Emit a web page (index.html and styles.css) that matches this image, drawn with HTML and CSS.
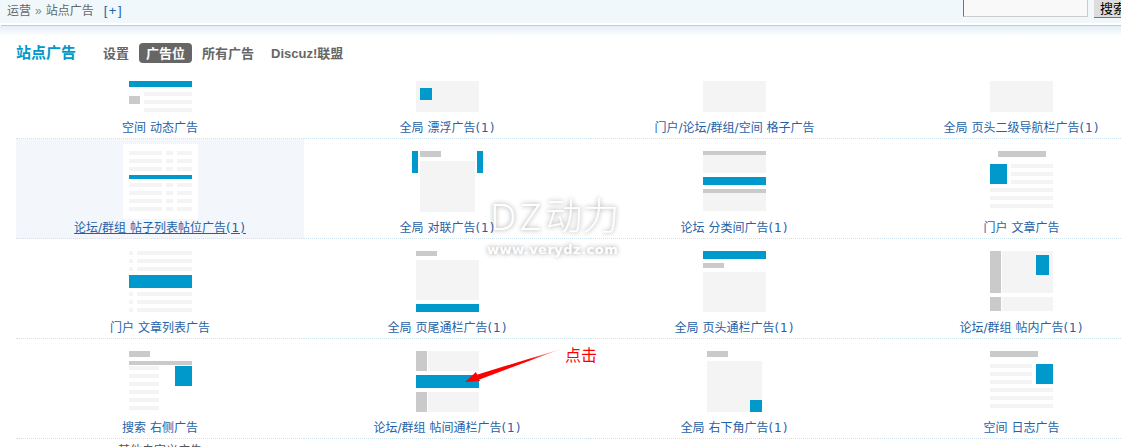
FILE: index.html
```html
<!DOCTYPE html>
<html lang="zh-CN">
<head>
    <meta charset="UTF-8">
    <title>站点广告</title>
    <link rel="stylesheet" href="styles.css">
</head>
<body>
    <div class="page">
        <div class="topbar">
            <div class="crumbs">运营<span class="crumb-sep">»</span>站点广告<a class="crumb-add">[+]</a></div>
            <div class="search">
                <input type="text" class="search-input">
                <button type="button" class="search-btn">搜索</button>
            </div>
        </div>
        <div class="topbar-fade"></div>

        <div class="tabs">
            <h1 class="tabs-title">站点广告</h1>
            <a class="tab">设置</a>
            <a class="tab tab-on">广告位</a>
            <a class="tab">所有广告</a>
            <a class="tab">Discuz!联盟</a>
        </div>

        <div class="ad-grid">
            <a class="ad-cell">
                <svg class="thumb thumb-cut" viewBox="-6 30 75 38">
                    <rect class="b" x="0" y="30" width="63" height="6"/>
                    <rect class="g" x="0" y="45" width="11" height="8"/>
                    <rect class="l" x="15" y="41" width="48" height="4"/>
                    <rect class="l" x="15" y="49" width="48" height="4"/>
                    <rect class="l" x="15" y="57" width="48" height="4"/>
                </svg>
                <span class="ad-name">空间 动态广告</span>
            </a>
            <a class="ad-cell">
                <svg class="thumb thumb-cut" viewBox="-6 30 75 38">
                    <rect class="l" x="0" y="30" width="63" height="31"/>
                    <rect class="b" x="4" y="37" width="12" height="12"/>
                </svg>
                <span class="ad-name">全局 漂浮广告<span class="num">(1)</span></span>
            </a>
            <a class="ad-cell">
                <svg class="thumb thumb-cut" viewBox="-6 30 75 38">
                    <rect class="l" x="0" y="30" width="63" height="31"/>
                </svg>
                <span class="ad-name">门户/论坛/群组/空间 格子广告</span>
            </a>
            <a class="ad-cell">
                <svg class="thumb thumb-cut" viewBox="-6 30 75 38">
                    <rect class="l" x="0" y="30" width="63" height="31"/>
                </svg>
                <span class="ad-name">全局 页头二级导航栏广告<span class="num">(1)</span></span>
            </a>

            <a class="ad-cell ad-hover">
                <svg class="thumb" viewBox="-6 -7 75 75">
                    <rect class="w" x="-6" y="-7" width="75" height="75"/>
                    <rect class="l" x="0" y="0" width="33" height="4"/>
                    <rect class="l" x="37" y="0" width="7" height="4"/>
                    <rect class="l" x="48" y="0" width="15" height="4"/>
                    <rect class="l" x="0" y="8" width="33" height="4"/>
                    <rect class="l" x="37" y="8" width="7" height="4"/>
                    <rect class="l" x="48" y="8" width="15" height="4"/>
                    <rect class="l" x="0" y="16" width="33" height="4"/>
                    <rect class="l" x="37" y="16" width="7" height="4"/>
                    <rect class="l" x="48" y="16" width="15" height="4"/>
                    <rect class="b" x="0" y="24" width="63" height="4"/>
                    <rect class="l" x="0" y="32" width="33" height="4"/>
                    <rect class="l" x="37" y="32" width="7" height="4"/>
                    <rect class="l" x="48" y="32" width="15" height="4"/>
                    <rect class="l" x="0" y="40" width="33" height="4"/>
                    <rect class="l" x="37" y="40" width="7" height="4"/>
                    <rect class="l" x="48" y="40" width="15" height="4"/>
                    <rect class="l" x="0" y="48" width="33" height="4"/>
                    <rect class="l" x="37" y="48" width="7" height="4"/>
                    <rect class="l" x="48" y="48" width="15" height="4"/>
                    <rect class="l" x="0" y="56" width="33" height="4"/>
                    <rect class="l" x="37" y="56" width="7" height="4"/>
                    <rect class="l" x="48" y="56" width="15" height="4"/>
                </svg>
                <span class="ad-name">论坛/群组 帖子列表帖位广告<span class="num">(1)</span></span>
            </a>
            <a class="ad-cell">
                <svg class="thumb" viewBox="-6 -7 75 75">
                    <rect class="b" x="-4" y="0" width="6" height="22"/>
                    <rect class="b" x="61" y="0" width="6" height="22"/>
                    <rect class="g" x="4" y="0" width="21" height="6"/>
                    <rect class="l" x="4" y="10" width="55" height="51"/>
                </svg>
                <span class="ad-name">全局 对联广告<span class="num">(1)</span></span>
            </a>
            <a class="ad-cell">
                <svg class="thumb" viewBox="-6 -7 75 75">
                    <rect class="g" x="0" y="0" width="63" height="4"/>
                    <rect class="l" x="0" y="4" width="63" height="18"/>
                    <rect class="b" x="0" y="26" width="63" height="8"/>
                    <rect class="g" x="0" y="38" width="63" height="4"/>
                    <rect class="l" x="0" y="42" width="63" height="18"/>
                </svg>
                <span class="ad-name">论坛 分类间广告<span class="num">(1)</span></span>
            </a>
            <a class="ad-cell">
                <svg class="thumb" viewBox="-6 -7 75 75">
                    <rect class="g" x="8" y="0" width="48" height="6"/>
                    <rect class="b" x="0" y="13" width="17" height="20"/>
                    <rect class="l" x="21" y="13" width="42" height="4"/>
                    <rect class="l" x="21" y="21" width="42" height="4"/>
                    <rect class="l" x="21" y="29" width="42" height="4"/>
                    <rect class="l" x="0" y="37" width="63" height="4"/>
                    <rect class="l" x="0" y="45" width="63" height="4"/>
                    <rect class="l" x="0" y="53" width="63" height="4"/>
                </svg>
                <span class="ad-name">门户 文章广告</span>
            </a>

            <a class="ad-cell">
                <svg class="thumb" viewBox="-6 -7 75 75">
                    <rect class="l" x="0" y="0" width="4" height="4"/>
                    <rect class="l" x="8" y="0" width="55" height="4"/>
                    <rect class="l" x="0" y="8" width="4" height="4"/>
                    <rect class="l" x="8" y="8" width="55" height="4"/>
                    <rect class="l" x="0" y="16" width="4" height="4"/>
                    <rect class="l" x="8" y="16" width="55" height="4"/>
                    <rect class="b" x="0" y="24" width="63" height="13"/>
                    <rect class="l" x="0" y="41" width="4" height="4"/>
                    <rect class="l" x="8" y="41" width="55" height="4"/>
                    <rect class="l" x="0" y="49" width="4" height="4"/>
                    <rect class="l" x="8" y="49" width="55" height="4"/>
                    <rect class="l" x="0" y="57" width="4" height="4"/>
                    <rect class="l" x="8" y="57" width="55" height="4"/>
                </svg>
                <span class="ad-name">门户 文章列表广告</span>
            </a>
            <a class="ad-cell">
                <svg class="thumb" viewBox="-6 -7 75 75">
                    <rect class="g" x="0" y="0" width="21" height="5"/>
                    <rect class="l" x="0" y="9" width="63" height="40"/>
                    <rect class="b" x="0" y="53" width="63" height="8"/>
                </svg>
                <span class="ad-name">全局 页尾通栏广告<span class="num">(1)</span></span>
            </a>
            <a class="ad-cell">
                <svg class="thumb" viewBox="-6 -7 75 75">
                    <rect class="b" x="0" y="0" width="63" height="8"/>
                    <rect class="g" x="0" y="12" width="21" height="5"/>
                    <rect class="l" x="0" y="21" width="63" height="40"/>
                </svg>
                <span class="ad-name">全局 页头通栏广告<span class="num">(1)</span></span>
            </a>
            <a class="ad-cell">
                <svg class="thumb" viewBox="-6 -7 75 75">
                    <rect class="g" x="0" y="0" width="11" height="42"/>
                    <rect class="l" x="12" y="0" width="51" height="42"/>
                    <rect class="b" x="46" y="4" width="13" height="20"/>
                    <rect class="g" x="0" y="46" width="11" height="14"/>
                    <rect class="l" x="12" y="46" width="51" height="14"/>
                </svg>
                <span class="ad-name">论坛/群组 帖内广告<span class="num">(1)</span></span>
            </a>

            <a class="ad-cell">
                <svg class="thumb" viewBox="-6 -7 75 75">
                    <rect class="g" x="0" y="0" width="21" height="6"/>
                    <rect class="g" x="0" y="10" width="63" height="4"/>
                    <rect class="l" x="0" y="15" width="30" height="4"/>
                    <rect class="l" x="0" y="23" width="30" height="4"/>
                    <rect class="l" x="0" y="31" width="30" height="4"/>
                    <rect class="l" x="0" y="39" width="30" height="4"/>
                    <rect class="l" x="0" y="47" width="30" height="4"/>
                    <rect class="l" x="0" y="55" width="30" height="4"/>
                    <rect class="b" x="46" y="15" width="17" height="20"/>
                </svg>
                <span class="ad-name">搜索 右侧广告</span>
            </a>
            <a class="ad-cell">
                <svg class="thumb" viewBox="-6 -7 75 75">
                    <rect class="g" x="0" y="0" width="11" height="20"/>
                    <rect class="l" x="12" y="0" width="51" height="20"/>
                    <rect class="b" x="0" y="24" width="63" height="13"/>
                    <rect class="g" x="0" y="41" width="11" height="20"/>
                    <rect class="l" x="12" y="41" width="51" height="20"/>
                </svg>
                <span class="ad-name">论坛/群组 帖间通栏广告<span class="num">(1)</span></span>
            </a>
            <a class="ad-cell">
                <svg class="thumb" viewBox="-6 -7 75 75">
                    <rect class="g" x="4" y="0" width="21" height="6"/>
                    <rect class="l" x="4" y="10" width="55" height="51"/>
                    <rect class="b" x="47" y="49" width="12" height="12"/>
                </svg>
                <span class="ad-name">全局 右下角广告<span class="num">(1)</span></span>
            </a>
            <a class="ad-cell">
                <svg class="thumb" viewBox="-6 -7 75 75">
                    <rect class="g" x="0" y="0" width="48" height="6"/>
                    <rect class="l" x="0" y="13" width="42" height="4"/>
                    <rect class="l" x="0" y="21" width="42" height="4"/>
                    <rect class="l" x="0" y="29" width="42" height="4"/>
                    <rect class="b" x="46" y="13" width="17" height="20"/>
                    <rect class="l" x="0" y="37" width="63" height="4"/>
                    <rect class="l" x="0" y="45" width="63" height="4"/>
                    <rect class="l" x="0" y="53" width="63" height="4"/>
                </svg>
                <span class="ad-name">空间 日志广告</span>
            </a>

            <div class="ad-more">其他自定义广告</div>
        </div>

        <!-- things drawn over the screenshot afterwards -->
        <div class="watermark">
            <div class="watermark-big"><span class="watermark-latin">DZ</span>动力</div>
            <div class="watermark-url">www.verydz.com</div>
        </div>
        <svg class="arrow" width="110" height="45" viewBox="460 345 110 45">
            <defs>
                <linearGradient id="arrow-fade" gradientUnits="userSpaceOnUse" x1="470" y1="380" x2="561" y2="349">
                    <stop offset="0" stop-color="#f00"/>
                    <stop offset="0.65" stop-color="#f00"/>
                    <stop offset="1" stop-color="#f00" stop-opacity="0.1"/>
                </linearGradient>
            </defs>
            <polygon fill="#f00" points="465,382 476,372 480,381"/>
            <polygon fill="url(#arrow-fade)" points="476,375 561,349 479.5,379.5"/>
        </svg>
        <div class="click-note">点击</div>
    </div>
</body>
</html>
```
FILE: styles.css
```css
html, body {
    margin: 0;
    padding: 0;
    height: 100%;
    overflow: hidden;
    background-color: white;
}

body {
    font-family: "Liberation Sans", "Noto Sans CJK SC", sans-serif;
    font-size: 12px;
    color: #666;
}

a {
    color: #1f62a8;
    text-decoration: none;
}

.page {
    position: relative;
    width: 1166px;
}

/* top bar */
.topbar {
    display: flex;
    justify-content: space-between;
    align-items: flex-start;
    height: 23px;
    background-color: #f0f8fc;
    border-bottom: 2px solid white;
    box-shadow: 0 2px 0 -1px #b8d0dc;
}

.crumbs {
    padding: 3px 0 0 7px;
    line-height: 16px;
}

.crumb-sep {
    margin: 0 4px;
    color: #888;
}

.crumb-add {
    margin-left: 10px;
    font-size: 13px;
    letter-spacing: 1.5px;
}

.search {
    display: flex;
    gap: 6px;
    margin-right: 0;
}

.search-input {
    box-sizing: border-box;
    width: 125px;
    height: 17px;
    margin: 0;
    padding: 0;
    background-color: #f9f9f9;
    border: 1px solid #ccc;
    border-top: none;
    border-left-color: #767676;
}

.search-btn {
    box-sizing: border-box;
    width: 72px;
    height: 18px;
    margin: 0;
    padding: 0 6px;
    text-align: left;
    font-family: inherit;
    font-size: 13px;
    line-height: 14px;
    color: #000;
    background-color: #ddd;
    border: none;
    border-bottom: 1px solid #777;
}

.topbar-fade {
    height: 10px;
    margin-top: 1px;
    background: linear-gradient(to bottom, #e2eef7, white);
}

/* tabs */
.tabs {
    display: flex;
    align-items: center;
    gap: 3px;
    height: 20px;
    margin-top: 7px;
    padding-left: 16px;
}

.tabs-title {
    width: 60px;
    margin: 0 17px 0 0;
    font-size: 15px;
    line-height: 22px;
    font-weight: bold;
    color: #0099cc;
}

.tab {
    height: 20px;
    padding: 0 7px;
    font-size: 13px;
    line-height: 22px;
    font-weight: bold;
    color: #666;
}

.tab-on {
    color: white;
    background-color: #666;
    border-radius: 4px;
}

/* ad position grid */
.ad-grid {
    display: grid;
    grid-template-columns: 288px 287px 287px 287px;
    margin: 18px 0 0 16px;
}

.ad-cell {
    display: flex;
    flex-direction: column;
    align-items: center;
    padding: 5px 0 3px;
    border-bottom: 1px dotted #cfe3ef;
}

.ad-cell:nth-child(-n+4) {
    padding-top: 0;
}

.ad-hover {
    background-color: #f3f7fc;
}

.ad-hover .ad-name {
    text-decoration: underline;
}

.thumb {
    display: block;
    width: 75px;
    height: 75px;
}

.thumb-cut {
    height: 38px;
}

.thumb .b { fill: #0099cc; }
.thumb .g { fill: #cacaca; }
.thumb .l { fill: #f4f4f4; }
.thumb .w { fill: white; }

.ad-name {
    padding-top: 1px;
    height: 15px;
    line-height: 16px;
    white-space: nowrap;
    font-family: "DejaVu Sans", "Noto Sans CJK SC", sans-serif;
}

.num {
    letter-spacing: 1px;
}

.ad-more {
    grid-column: 1;
    padding-top: 4px;
    line-height: 16px;
    text-align: center;
    color: #555;
}

/* watermark and the red note */
.watermark {
    position: absolute;
    left: 487px;
    top: 192px;
    color: white;
    text-shadow: 0 0 5px rgba(0, 0, 0, 0.4);
}

.watermark-big {
    padding-left: 3px;
    font-family: "Noto Sans", "Noto Sans CJK SC", sans-serif;
    font-size: 37px;
    line-height: 48px;
    font-weight: 300;
}

.watermark-latin {
    letter-spacing: 4px;
}

.watermark-url {
    margin-top: 1px;
    font-family: "DejaVu Sans", sans-serif;
    font-size: 13px;
    line-height: 18px;
    font-weight: bold;
    letter-spacing: 0.5px;
}

.arrow {
    position: absolute;
    left: 460px;
    top: 345px;
}

.click-note {
    position: absolute;
    left: 565px;
    top: 346px;
    font-size: 16px;
    line-height: 20px;
    color: #f00;
}
```
